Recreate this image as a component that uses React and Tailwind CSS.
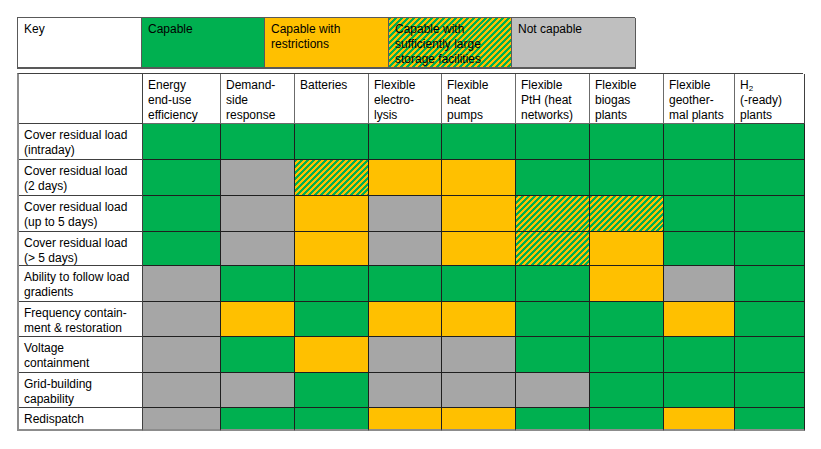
import React from 'react';

const G = 'g';
const Y = 'y';
const N = 'n';
const S = 's';

const fill = {
  g: 'bg-[#00b050]',
  y: 'bg-[#ffc000]',
  n: 'bg-[#a6a6a6]',
  s: 'bg-[repeating-linear-gradient(135deg,#00b050_0px,#00b050_2.1px,#ffc000_2.1px,#ffc000_4.2px)]',
};

const columns = [
  ['Energy', 'end-use', 'efficiency'],
  ['Demand-', 'side', 'response'],
  ['Batteries'],
  ['Flexible', 'electro-', 'lysis'],
  ['Flexible', 'heat', 'pumps'],
  ['Flexible', 'PtH (heat', 'networks)'],
  ['Flexible', 'biogas', 'plants'],
  ['Flexible', 'geother-', 'mal plants'],
];

const rows = [
  { label: ['Cover residual load', '(intraday)'], cells: [G, G, G, G, G, G, G, G, G] },
  { label: ['Cover residual load', '(2 days)'], cells: [G, N, S, Y, Y, G, G, G, G] },
  { label: ['Cover residual load', '(up to 5 days)'], cells: [G, N, Y, N, Y, S, S, G, G] },
  { label: ['Cover residual load', '(> 5 days)'], cells: [G, N, Y, N, Y, S, Y, G, G] },
  { label: ['Ability to follow load', 'gradients'], cells: [N, G, G, G, G, G, Y, N, G] },
  { label: ['Frequency contain-', 'ment & restoration'], cells: [N, Y, G, Y, Y, G, G, Y, G] },
  { label: ['Voltage', 'containment'], cells: [N, G, Y, N, N, G, G, G, G] },
  { label: ['Grid-building', 'capability'], cells: [N, N, G, N, N, N, G, G, G] },
  { label: ['Redispatch'], cells: [N, G, G, Y, Y, G, G, Y, G] },
];

function Lines({ lines }) {
  return lines.map((l, i) => <div key={i}>{l}</div>);
}

export default function App() {
  return (
    <div className="min-h-screen bg-white pt-[17px] pl-[17px] text-[12px] leading-[15px] text-black font-['Liberation_Sans',Arial,sans-serif]">
      {/* key */}
      <div className="grid w-[618px] grid-cols-[124px_123px_124px_123px_124px] grid-rows-[51px] border-l border-t border-[#595959]">
        <div className="border-b-2 border-r border-[#595959] px-[6px] pt-[4px]">Key</div>
        <div className={`border-b-2 border-r border-[#595959] px-[6px] pt-[4px] ${fill.g}`}>Capable</div>
        <div className={`border-b-2 border-r border-[#595959] px-[6px] pt-[4px] ${fill.y}`}>
          <Lines lines={['Capable with', 'restrictions']} />
        </div>
        <div className={`overflow-hidden border-b-2 border-r border-[#595959] px-[6px] pt-[4px] ${fill.s}`}>
          <Lines lines={['Capable with', 'sufficiently large', 'storage facilities']} />
        </div>
        <div className="border-b-2 border-r border-[#595959] bg-[#bfbfbf] px-[6px] pt-[4px]">Not capable</div>
      </div>

      {/* capability matrix */}
      <div className="mt-[4px] grid w-[786px] grid-cols-[124px_78px_74px_74px_73px_74px_74px_74px_71px_70px] grid-rows-[50px_36px_36px_36px_34px_36px_35px_36px_35px_23px] border-l-2 border-t border-l-[#8c8c8c] border-t-[#404040]">
        <div className="border-b border-r border-[#404040]" />
        {columns.map((c, i) => (
          <div key={i} className="border-b border-r border-[#6b6b6b] px-[5px] pt-[4px]">
            <Lines lines={c} />
          </div>
        ))}
        <div className="border-b border-r border-[#404040] px-[5px] pt-[4px]">
          <div>
            H<sub className="text-[8px]">2</sub>
          </div>
          <div>(-ready)</div>
          <div>plants</div>
        </div>

        {rows.map((r, ri) => (
          <React.Fragment key={ri}>
            <div
              className={`border-r border-[#404040] px-[5px] pt-[4px] ${
                ri === rows.length - 1 ? 'border-b-2 border-b-[#8c8c8c]' : 'border-b'
              }`}
            >
              <Lines lines={r.label} />
            </div>
            {r.cells.map((c, ci) => (
              <div
                key={ci}
                className={`border-r border-[#1f1f1f] ${fill[c]} ${
                  ri === rows.length - 1 ? 'border-b-2 border-b-[#8c8c8c]' : 'border-b'
                }`}
              />
            ))}
          </React.Fragment>
        ))}
      </div>
    </div>
  );
}
